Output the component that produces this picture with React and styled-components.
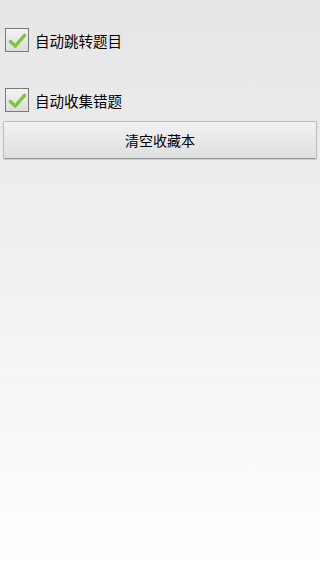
import React, { useState } from 'react';
import styled, { createGlobalStyle } from 'styled-components';

const GlobalStyle = createGlobalStyle`
  html, body {
    margin: 0;
    padding: 0;
  }
  body {
    font-family: 'Roboto', 'Noto Sans CJK SC', sans-serif;
  }
`;

const Page = styled.div`
  width: 320px;
  height: 569px;
  background: linear-gradient(180deg, #e6e6e6 0%, #f0f0f0 45%, #ffffff 100%);
  display: flex;
  flex-direction: column;
  padding-top: 27px;
  box-sizing: border-box;
`;

const Option = styled.label`
  display: flex;
  align-items: center;
  gap: 6px;
  height: 26px;
  padding-left: 5px;
  margin-bottom: ${props => props.gap || 0}px;
  cursor: pointer;
`;

const Box = styled.span`
  width: 22px;
  height: 22px;
  border: 1px solid #7a7a7a;
  background: linear-gradient(180deg, #f4f4f4, #dcdcdc);
  display: flex;
  align-items: center;
  justify-content: center;
  box-sizing: content-box;
`;

const Label = styled.span`
  font-size: 14.5px;
  color: #000;
  font-family: 'Noto Sans CJK SC', sans-serif;
`;

const Button = styled.button`
  margin: 8px 3px 0;
  height: 38px;
  border: 1px solid #bdbdbd;
  border-bottom-color: #9a9a9a;
  border-radius: 2px;
  background: linear-gradient(180deg, #f2f2f2 0%, #e0e0e0 100%);
  font-family: 'Noto Sans CJK SC', sans-serif;
  font-size: 14px;
  color: #000;
  box-shadow: 0 1px 1px rgba(0, 0, 0, 0.15);
`;

const Check = () => (
  <svg width="19" height="17" viewBox="0 0 20 18">
    <path d="M2.5 10 L7.5 15 L17.5 3.5" fill="none" stroke="#7cc63a" strokeWidth="3.6" strokeLinecap="round" strokeLinejoin="round" />
  </svg>
);

const App = () => {
  const [jump, setJump] = useState(true);
  const [collect, setCollect] = useState(true);

  return (
    <Page>
      <GlobalStyle />
      <Option gap={34} onClick={() => setJump(!jump)}>
        <Box>{jump && <Check />}</Box>
        <Label>自动跳转题目</Label>
      </Option>
      <Option onClick={() => setCollect(!collect)}>
        <Box>{collect && <Check />}</Box>
        <Label>自动收集错题</Label>
      </Option>
      <Button>清空收藏本</Button>
    </Page>
  );
};

export default App;
